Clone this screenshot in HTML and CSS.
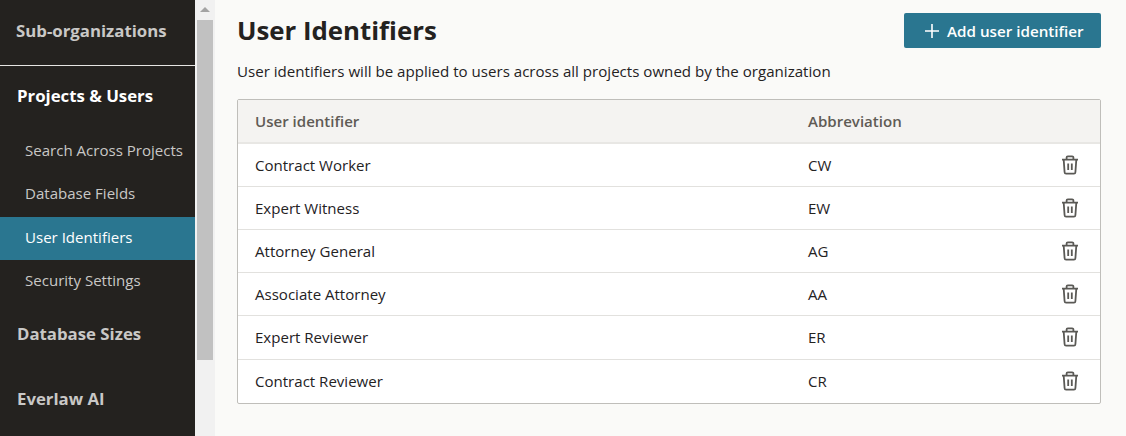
FILE: index.html
```html
<!DOCTYPE html>
<html lang="en">
<head>
<meta charset="utf-8">
<title>User Identifiers</title>
<link rel="stylesheet" href="styles.css">
</head>
<body>
<svg class="defs" width="0" height="0" aria-hidden="true">
  <symbol id="trash" viewBox="0 0 18 20">
    <path d="M1 4.7h16M2.7 4.7l.9 12.5a1.5 1.5 0 0 0 1.5 1.4h7.8a1.5 1.5 0 0 0 1.5-1.4l.9-12.5M5.6 4.7V2.5A1.2 1.2 0 0 1 6.8 1.3h4.4a1.2 1.2 0 0 1 1.2 1.2v2.2M7.2 8.6v6.4M10.8 8.6v6.4" fill="none" stroke="currentColor" stroke-width="1.8"/>
  </symbol>
</svg>
<div class="app">
  <nav class="sidebar">
    <div class="org-section"><a class="nav-head">Sub-organizations</a></div>
    <div class="nav-group">
      <a class="nav-head nav-head-active">Projects &amp; Users</a>
      <ul class="sub-nav">
        <li class="sub-item">Search Across Projects</li>
        <li class="sub-item">Database Fields</li>
        <li class="sub-item sub-item-active">User Identifiers</li>
        <li class="sub-item">Security Settings</li>
      </ul>
    </div>
    <a class="nav-head nav-head-sizes">Database Sizes</a>
    <a class="nav-head nav-head-ai">Everlaw AI</a>
  </nav>
  <div class="scrollbar">
    <div class="scroll-arrow"></div>
    <div class="scroll-thumb"></div>
  </div>
  <main class="content">
    <header class="page-head">
      <h1 class="page-title">User Identifiers</h1>
      <button class="add-btn" type="button">
        <svg class="plus" viewBox="0 0 16 16" width="16" height="16" aria-hidden="true"><path d="M8 1v14M1 8h14" stroke="currentColor" stroke-width="1.6" fill="none"/></svg>
        Add user identifier
      </button>
    </header>
    <p class="page-desc">User identifiers will be applied to users across all projects owned by the organization</p>
    <div class="table">
      <div class="row row-head"><span class="col-name">User identifier</span><span class="col-abbr">Abbreviation</span></div>
      <div class="row"><span class="col-name">Contract Worker</span><span class="col-abbr">CW</span><svg class="trash"><use href="#trash"/></svg></div>
      <div class="row"><span class="col-name">Expert Witness</span><span class="col-abbr">EW</span><svg class="trash"><use href="#trash"/></svg></div>
      <div class="row"><span class="col-name">Attorney General</span><span class="col-abbr">AG</span><svg class="trash"><use href="#trash"/></svg></div>
      <div class="row"><span class="col-name">Associate Attorney</span><span class="col-abbr">AA</span><svg class="trash"><use href="#trash"/></svg></div>
      <div class="row"><span class="col-name">Expert Reviewer</span><span class="col-abbr">ER</span><svg class="trash"><use href="#trash"/></svg></div>
      <div class="row"><span class="col-name">Contract Reviewer</span><span class="col-abbr">CR</span><svg class="trash"><use href="#trash"/></svg></div>
    </div>
  </main>
</div>
</body>
</html>
```
FILE: styles.css
```css
* { box-sizing: border-box; }
html, body { margin: 0; height: 100%; overflow: hidden; }
body { font-family: "Open Sans", sans-serif; color: #24221f; background: #fafaf8; }
.defs { position: absolute; }
.app { display: flex; height: 436px; }

.sidebar { width: 195px; flex: none; background: #24221f; color: #c9c8c6; }
.org-section { height: 66px; border-bottom: 1px solid #e6e5e2; padding-top: 18px; }
.nav-head { display: block; font-size: 16.8px; font-weight: 700; line-height: 26px; padding-left: 16px; white-space: nowrap; }
.nav-head-active { color: #fff; padding-top: 17px; padding-left: 17px; line-height: 26px; }
.sub-nav { list-style: none; margin: 21px 0 0; padding: 0; }
.sub-item { height: 43.4px; line-height: 41px; font-size: 15.05px; padding-left: 25px; white-space: nowrap; }
.sub-item-active { background: #2a7690; color: #fff; }
.nav-head-sizes { margin-top: 17px; padding-left: 17px; }
.nav-head-ai { margin-top: 39px; padding-left: 17px; }

.scrollbar { width: 20px; flex: none; background: #f1f1f1; padding: 0 2px; }
.scroll-arrow { width: 0; height: 0; margin: 7px 0 0 3px; border: 5px solid transparent; border-top: 0; border-bottom-color: #a3a3a3; }
.scroll-thumb { height: 340px; margin-top: 8px; background: #c1c1c1; }

.content { flex: 1; min-width: 0; padding: 13px 25px 0 22px; }
.page-head { display: flex; justify-content: space-between; align-items: flex-start; height: 35px; }
.page-title { margin: 0; font-size: 25.8px; font-weight: 700; line-height: 35px; }
.add-btn { display: flex; align-items: center; gap: 7px; width: 197px; height: 35px; padding: 0 0 0 20px; border: 0; border-radius: 2px; background: #2a7690; color: #fff; font: 600 15.2px/20px "Open Sans", sans-serif; }
.plus { flex: none; }
.page-desc { margin: 13px 0 0; font-size: 15.1px; line-height: 20px; }

.table { margin-top: 18px; border: 1px solid #bfbeba; border-radius: 2px; background: #fff; }
.row { display: flex; align-items: center; height: 43.11px; padding: 0 21px 0 17px; font-size: 15.05px; border-bottom: 1px solid #e2e1de; }
.row:last-child { border-bottom: 0; height: 43.45px; }
.row-head { height: 44px; background: #f4f3f1; color: #5f5b55; font-weight: 600; border-bottom: 2px solid #e8e7e4; }
.col-name { width: 553px; flex: none; }
.col-abbr { flex: 1; }
.trash { width: 18px; height: 20px; color: #5a5955; flex: none; }
```
